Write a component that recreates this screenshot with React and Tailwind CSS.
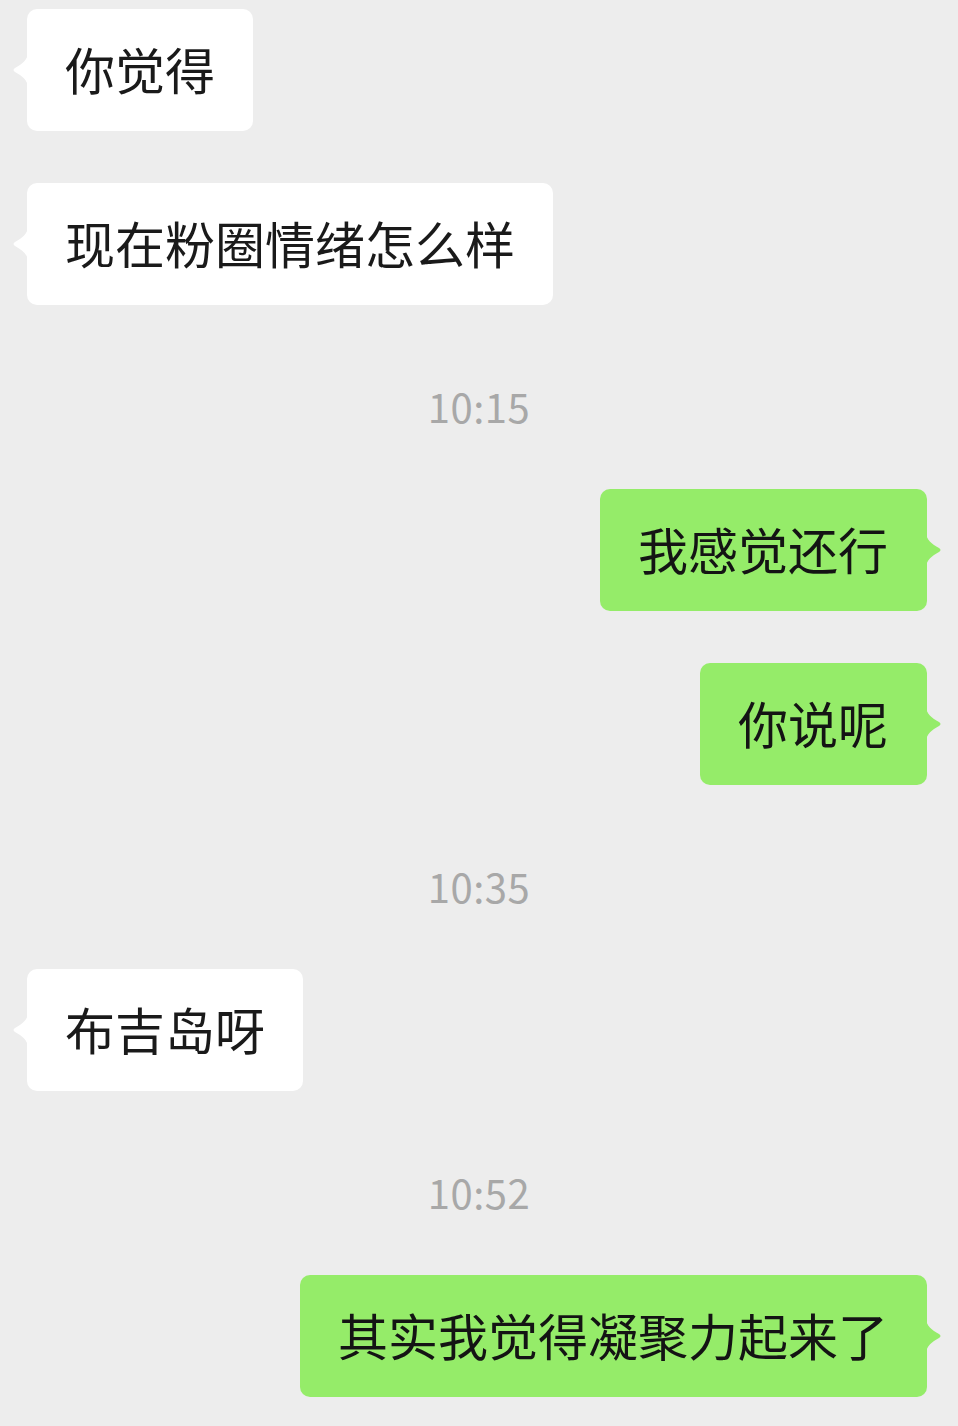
const FONT = { fontFamily: '"Noto Sans CJK SC", "Noto Sans", sans-serif' };

function Tail({ side, color }) {
  const left = side === "left";
  return (
    <svg
      width="16"
      height="36"
      viewBox="0 0 16 36"
      className={left ? "absolute -left-[15px] top-1/2 -translate-y-1/2" : "absolute -right-[15px] top-1/2 -translate-y-1/2"}
    >
      {left ? (
        <path d="M16 0 C16 8 10 12 3 16 Q0 18 3 20 C10 24 16 28 16 36 Z" fill={color} />
      ) : (
        <path d="M0 0 C0 8 6 12 13 16 Q16 18 13 20 C6 24 0 28 0 36 Z" fill={color} />
      )}
    </svg>
  );
}

function Bubble({ text, mine }) {
  return (
    <div className={mine ? "flex justify-end pr-[31px]" : "flex justify-start pl-[27px]"}>
      <div
        className={
          mine
            ? "relative h-[122px] flex items-center rounded-[10px] bg-[#95ec69] pl-[38px] pr-[39px] pb-[4px] text-[50px] text-[#141414] leading-none"
            : "relative h-[122px] flex items-center rounded-[10px] bg-white pl-[38px] pr-[38px] pb-[4px] text-[50px] text-[#1a1a1a] leading-none"
        }
      >
        <Tail side={mine ? "right" : "left"} color={mine ? "#95ec69" : "#ffffff"} />
        <span>{text}</span>
      </div>
    </div>
  );
}

function Time({ t }) {
  return (
    <div className="flex justify-center h-[40px] items-center text-[40px] text-[#a8a8a8] leading-none tracking-[0.5px]">
      {t}
    </div>
  );
}

export default function App() {
  return (
    <div className="w-[958px] h-[1426px] bg-[#ededed] overflow-hidden pt-[9px]" style={FONT}>
      <Bubble text="你觉得" />
      <div className="h-[52px]" />
      <Bubble text="现在粉圈情绪怎么样" />
      <div className="h-[81px]" />
      <Time t="10:15" />
      <div className="h-[63px]" />
      <Bubble text="我感觉还行" mine />
      <div className="h-[52px]" />
      <Bubble text="你说呢" mine />
      <div className="h-[81px]" />
      <Time t="10:35" />
      <div className="h-[63px]" />
      <Bubble text="布吉岛呀" />
      <div className="h-[81px]" />
      <Time t="10:52" />
      <div className="h-[63px]" />
      <Bubble text="其实我觉得凝聚力起来了" mine />
    </div>
  );
}
